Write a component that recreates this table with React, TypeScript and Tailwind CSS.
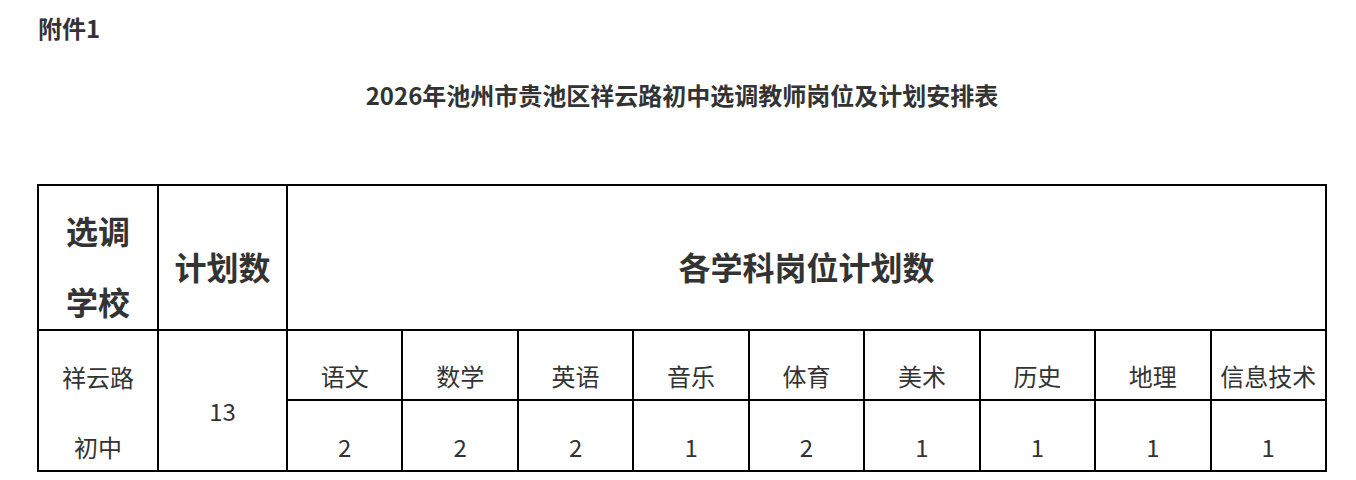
const subjects = [
  { name: '语文', count: 2 },
  { name: '数学', count: 2 },
  { name: '英语', count: 2 },
  { name: '音乐', count: 1 },
  { name: '体育', count: 2 },
  { name: '美术', count: 1 },
  { name: '历史', count: 1 },
  { name: '地理', count: 1 },
  { name: '信息技术', count: 1 },
];

// each cell is a white box; the black grid gap draws the 2px rules
const cell = 'bg-white flex items-center justify-center text-center';

export default function App() {
  return (
    <div
      className="w-[1356px] h-[480px] bg-white text-[#333333] overflow-hidden"
      style={{ fontFamily: '"Noto Sans CJK SC", "Noto Sans", sans-serif' }}
    >
      {/* 附件 */}
      <div className="pt-[12px] pl-[38px] text-[24px] font-bold leading-[32px]">附件1</div>

      {/* Title */}
      <h1 className="mt-[35px] ml-[37px] w-[1290px] text-center text-[24px] font-bold leading-[32px]">
        2026年池州市贵池区祥云路初中选调教师岗位及计划安排表
      </h1>

      {/* Table */}
      <div className="mt-[73px] ml-[37px] w-[1290px] grid grid-cols-[118px_127px_repeat(9,1fr)] grid-rows-[143px_68px_69px] gap-[2px] p-[2px] bg-black">
        <div className={`${cell} pt-[17px] text-[32px] font-bold leading-[71px]`}>
          <div>
            选调
            <br />
            学校
          </div>
        </div>
        <div className={`${cell} pt-[17px] text-[32px] font-bold leading-[40px]`}>计划数</div>
        <div className={`${cell} col-span-9 pt-[17px] text-[32px] font-bold leading-[40px]`}>
          各学科岗位计划数
        </div>

        <div className={`${cell} row-span-2 pt-[22px] text-[24px] leading-[70px]`}>
          <div>
            祥云路
            <br />
            初中
          </div>
        </div>
        <div className={`${cell} row-span-2 pt-[20px] text-[24px] leading-[30px]`}>13</div>
        {subjects.map((s) => (
          <div key={s.name} className={`${cell} pt-[21px] text-[24px] leading-[30px] whitespace-nowrap`}>
            {s.name}
          </div>
        ))}
        {subjects.map((s) => (
          <div key={s.name + '-n'} className={`${cell} pt-[23px] text-[24px] leading-[30px]`}>
            {s.count}
          </div>
        ))}
      </div>
    </div>
  );
}
